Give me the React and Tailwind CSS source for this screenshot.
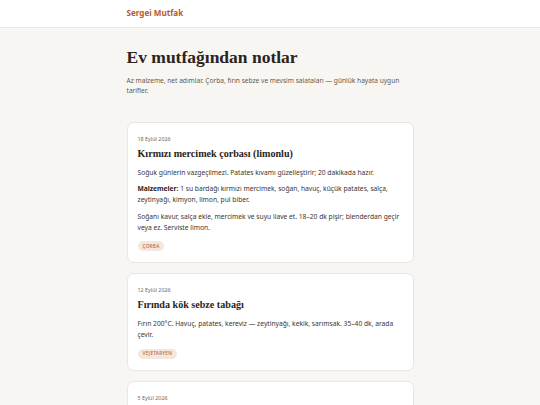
import React from "react";

function Tag({ children }) {
  return (
    <span className="inline-flex h-[10px] items-center rounded-full bg-[#f6e7dd] px-[5px] text-[4.8px] font-medium uppercase tracking-[0.04em] text-[#b96a45]">
      {children}
    </span>
  );
}

function Card({ date, title, children, tag }) {
  return (
    <article className="rounded-[7px] border border-[#ebe6de] bg-white px-[10px] pt-[12px] pb-[11px]">
      <div className="text-[5.4px] leading-[8px] text-[#6f675f]">{date}</div>
      <h2 className="mt-[4px] font-['Liberation_Serif',Georgia,serif] text-[10.1px] leading-[14px] font-bold text-[#2a2420]">
        {title}
      </h2>
      <div className="mt-[6px] flex flex-col gap-[5.5px] text-[6.7px] leading-[11px] text-[#3b352f]">
        {children}
      </div>
      {tag && (
        <div className="mt-[8.5px] flex">
          <Tag>{tag}</Tag>
        </div>
      )}
    </article>
  );
}

export default function App() {
  return (
    <div className="min-h-[405px] bg-[#f8f6f2] font-['Noto_Sans','Open_Sans',sans-serif]">
      <header className="h-[28px] border-b border-[#ece8e1] bg-white">
        <div className="mx-auto flex h-full w-[287px] items-center">
          <span className="text-[8.1px] font-bold text-[#b85a2c]">Sergei Mutfak</span>
        </div>
      </header>
      <main className="mx-auto w-[287px] pt-[18.4px]">
        <h1 className="font-['Liberation_Serif',Georgia,serif] text-[17.5px] leading-[22px] font-bold text-[#2a2420]">
          Ev mutfağından notlar
        </h1>
        <p className="mt-[7.3px] text-[6.6px] leading-[10.5px] text-[#5f5851]">
          Az malzeme, net adımlar. Çorba, fırın sebze ve mevsim salataları — günlük hayata uygun tarifler.
        </p>
        <div className="mt-[25.25px] flex flex-col gap-[10px]">
          <Card date="18 Eylül 2026" title="Kırmızı mercimek çorbası (limonlu)" tag="Çorba">
            <p>Soğuk günlerin vazgeçilmezi. Patates kıvamı güzelleştirir; 20 dakikada hazır.</p>
            <p>
              <strong className="font-bold text-[#2a2420]">Malzemeler:</strong> 1 su bardağı kırmızı mercimek, soğan, havuç, küçük patates, salça, zeytinyağı, kimyon, limon, pul biber.
            </p>
            <p>Soğanı kavur, salça ekle, mercimek ve suyu ilave et. 18–20 dk pişir; blenderdan geçir veya ez. Serviste limon.</p>
          </Card>
          <Card date="12 Eylül 2026" title="Fırında kök sebze tabağı" tag="Vejetaryen">
            <p>Fırın 200°C. Havuç, patates, kereviz — zeytinyağı, kekik, sarımsak. 35–40 dk, arada çevir.</p>
          </Card>
          <Card date="5 Eylül 2026" title="Mevsim salatası" tag="Salata">
            <p>Domates, salatalık, biber, maydanoz; nar ekşisi ve zeytinyağı ile.</p>
          </Card>
        </div>
      </main>
    </div>
  );
}
